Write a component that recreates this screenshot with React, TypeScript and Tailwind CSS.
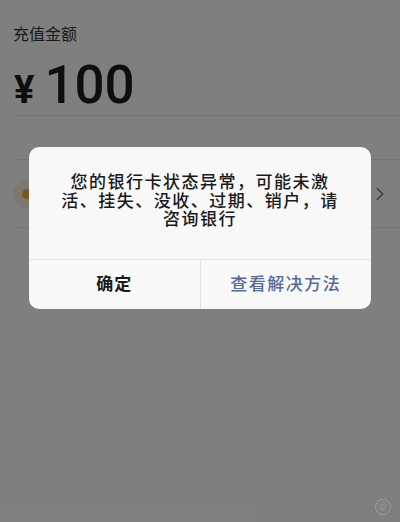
import React from 'react';
import { ChevronRight } from 'lucide-react';

const App: React.FC = () => {
  return (
    <div
      className="relative w-[400px] h-[522px] overflow-hidden bg-white text-[#1c1c1c]"
      style={{ fontFamily: 'Roboto, "Noto Sans CJK SC", sans-serif' }}
    >
      {/* page under the modal */}
      <div className="pl-[13px]">
        <div className="pt-[26px] text-[16px] leading-[18px] text-[#333]">充值金额</div>
        <div className="flex items-baseline pt-[15px] h-[71px]">
          <span className="text-[38px] font-bold leading-none ml-[1px]">¥</span>
          <span className="text-[53px] font-medium leading-none ml-[10px]">100</span>
        </div>
        <div className="h-px bg-[#ececec]" />
        <div className="h-[43px]" />
        <div className="h-px bg-[#ececec]" />
        <div className="h-[67px] flex items-center pr-[9px]">
          <div className="size-[28px] rounded-full bg-[#fdf3e0] flex items-center justify-center">
            <div className="size-[10px] rounded-full bg-[#f0b23a]" />
          </div>
          <div className="flex-1" />
          <ChevronRight className="size-[22px] text-[#777]" strokeWidth={1.6} />
        </div>
        <div className="h-px bg-[#ececec]" />
      </div>

      {/* dim overlay */}
      <div className="absolute inset-0 bg-black/50" />

      {/* watermark */}
      <div className="absolute left-[375px] top-[499px] size-[16px] rounded-full border border-[#9a9a9a] flex items-center justify-center text-[10px] text-[#9a9a9a]">
        ©
      </div>

      {/* dialog */}
      <div className="absolute left-[29px] top-[147px] w-[342px] rounded-[10px] bg-[#f8f8f8] overflow-hidden">
        <div className="h-[112px] flex items-center justify-center text-center text-[17px] leading-[18.5px] tracking-[1.5px] font-medium text-[#1a1a1a] pb-[4px]">
          <p>
            您的银行卡状态异常，可能未激
            <br />
            活、挂失、没收、过期、销户，请
            <br />
            咨询银行
          </p>
        </div>
        <div className="flex h-[50px] border-t border-[#e2e2e2]">
          <button className="flex-1 flex items-center justify-center text-[17px] tracking-[1px] text-[#1a1a1a] font-bold">
            确定
          </button>
          <div className="w-px bg-[#e2e2e2]" />
          <button className="flex-1 flex items-center justify-center text-[17px] tracking-[1.5px] font-medium text-[#576b95]">
            查看解决方法
          </button>
        </div>
      </div>
    </div>
  );
};

export default App;
